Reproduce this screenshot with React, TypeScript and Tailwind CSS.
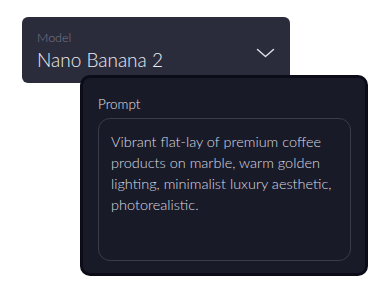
export default function App() {
  return (
    <div
      className="w-[384px] h-[288px] bg-white overflow-hidden pt-[17px] pl-[22px]"
      style={{ fontFamily: "Lato, 'Noto Sans', sans-serif" }}
    >
      {/* Model select */}
      <div className="w-[268px] h-[66px] rounded-[6px] bg-[#2b2c3b] flex items-start justify-between pl-[15px] pr-[15px] pt-[13px]">
        <div className="flex flex-col">
          <span className="text-[12.5px] leading-[16px] font-light text-[#7a7b8b]">Model</span>
          <span className="text-[19px] leading-[24px] font-light text-[#ececf2] mt-[2px]">Nano Banana 2</span>
        </div>
        <svg className="mt-[18px]" width="19" height="10" viewBox="0 0 19 10" fill="none">
          <polyline points="1.5,1.5 9.5,8.5 17.5,1.5" stroke="#dcdce4" strokeWidth="1.5" strokeLinecap="round" strokeLinejoin="round" />
        </svg>
      </div>

      {/* Prompt card */}
      <div className="ml-[58px] -mt-[8px] w-[288px] h-[201px] rounded-[10px] border-[3px] border-[#0b0c18] bg-[#191a28] px-[15px] pt-[17px]">
        <div className="text-[13.5px] leading-[18px] font-light text-[#e0e0e8]">Prompt</div>
        <div className="mt-[5px] w-[253px] h-[143px] rounded-[12px] border border-[#3a3b4b] px-[12px] pt-[12px]">
          <p className="text-[14.5px] leading-[21px] font-light text-[#dadae2]">
            Vibrant flat-lay of premium coffee products on marble, warm golden lighting, minimalist luxury aesthetic, photorealistic.
          </p>
        </div>
      </div>
    </div>
  );
}
